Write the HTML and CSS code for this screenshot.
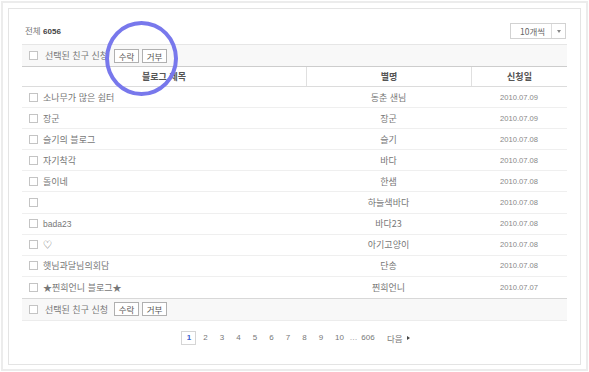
FILE: index.html
```html
<!DOCTYPE html>
<html lang="ko">
<head>
<meta charset="utf-8">
<link rel="stylesheet" href="styles.css">
</head>
<body>
<div class="outer">
  <div class="inner">
    <div class="topbar">
      <div class="total"><span class="total-label">전체</span> <b>6056</b></div>
      <div class="select"><span class="select-text">10개씩</span><span class="select-btn"><span class="tri"></span></span></div>
    </div>
    <div class="band">
      <span class="chk"></span><span class="band-text">선택된 친구 신청</span>
      <span class="btn">수락</span><span class="btn">거부</span>
    </div>
    <div class="thead">
      <div class="c1 th">블로그 제목</div>
      <div class="c2 th">별명</div>
      <div class="c3 th">신청일</div>
    </div>
    <div class="rows">
      <div class="row"><div class="c1"><span class="chk"></span><span class="title">소나무가 많은 쉼터</span></div><div class="c2">동춘 샌님</div><div class="c3 date">2010.07.09</div></div>
      <div class="row"><div class="c1"><span class="chk"></span><span class="title">장군</span></div><div class="c2">장군</div><div class="c3 date">2010.07.09</div></div>
      <div class="row"><div class="c1"><span class="chk"></span><span class="title">슬기의 블로그</span></div><div class="c2">슬기</div><div class="c3 date">2010.07.08</div></div>
      <div class="row"><div class="c1"><span class="chk"></span><span class="title">자기착각</span></div><div class="c2">바다</div><div class="c3 date">2010.07.08</div></div>
      <div class="row"><div class="c1"><span class="chk"></span><span class="title">돌이네</span></div><div class="c2">한샘</div><div class="c3 date">2010.07.08</div></div>
      <div class="row"><div class="c1"><span class="chk"></span><span class="title"></span></div><div class="c2">하늘색바다</div><div class="c3 date">2010.07.08</div></div>
      <div class="row"><div class="c1"><span class="chk"></span><span class="title latin">bada23</span></div><div class="c2">바다23</div><div class="c3 date">2010.07.08</div></div>
      <div class="row"><div class="c1"><span class="chk"></span><span class="title">♡</span></div><div class="c2">아기고양이</div><div class="c3 date">2010.07.08</div></div>
      <div class="row"><div class="c1"><span class="chk"></span><span class="title">햇님과달님의회담</span></div><div class="c2">단송</div><div class="c3 date">2010.07.08</div></div>
      <div class="row"><div class="c1"><span class="chk"></span><span class="title">★찐희언니 블로그★</span></div><div class="c2">찐희언니</div><div class="c3 date">2010.07.07</div></div>
    </div>
    <div class="band band-bottom">
      <span class="chk"></span><span class="band-text">선택된 친구 신청</span>
      <span class="btn">수락</span><span class="btn">거부</span>
    </div>
    <div class="pager">
      <span class="pg cur">1</span>
      <span class="pg">2</span>
      <span class="pg">3</span>
      <span class="pg">4</span>
      <span class="pg">5</span>
      <span class="pg">6</span>
      <span class="pg">7</span>
      <span class="pg">8</span>
      <span class="pg">9</span>
      <span class="pg pg10">10</span>
      <span class="dots">…</span>
      <span class="pg pg606">606</span>
      <span class="next">다음<span class="arrow"></span></span>
    </div>
  </div>
</div>
<div class="ring"></div>
</body>
</html>
```
FILE: styles.css
```css
* { box-sizing: border-box; }
html, body { margin: 0; padding: 0; background: #fff; }
body {
  font-family: "Noto Sans CJK KR", "Noto Sans", sans-serif;
  font-size: 9px;
  color: #666;
  width: 589px;
  height: 372px;
  position: relative;
  overflow: hidden;
}
.outer {
  margin: 1px;
  height: 370px;
  border: 2px solid #ececec;
  padding: 5px;
}
.inner {
  height: 357px;
  border: 1px solid #e4e4e4;
  padding: 0 13px 0 13px;
}
.topbar {
  display: flex;
  justify-content: space-between;
  align-items: center;
  height: 16px;
  margin-top: 14px;
  margin-right: 1px;
}
.total { font-size: 8.5px; color: #777; padding-left: 3px; line-height: 16px; }
.total b { color: #444; font-family: "Liberation Sans", sans-serif; font-size: 8px; }
.select {
  display: flex;
  width: 56px;
  height: 16px;
  border: 1px solid #d2d2d2;
  background: #fff;
}
.select-text {
  flex: 1;
  font-size: 8.5px;
  color: #666;
  line-height: 14px;
  padding-left: 9px;
}
.select-btn {
  width: 14px;
  border-left: 1px solid #dcdcdc;
  display: flex;
  align-items: center;
  justify-content: center;
}
.tri {
  width: 0; height: 0;
  border-left: 2.5px solid transparent;
  border-right: 2.5px solid transparent;
  border-top: 3px solid #888;
}
.band {
  display: flex;
  align-items: center;
  height: 22px;
  margin-top: 5px;
  background: #f8f8f8;
  border-top: 1px solid #e6e6e6;
  padding-left: 7px;
}
.band-bottom {
  margin-top: 0;
  border-top: 1px solid #d8d8d8;
  border-bottom: 1px solid #ececec;
  height: 23px;
}
.chk {
  display: inline-block;
  width: 9px;
  height: 9px;
  border: 1px solid #c4c4c4;
  background: #fff;
  flex: none;
}
.band-text { margin-left: 7px; color: #777; }
.btn {
  display: inline-flex;
  align-items: center;
  justify-content: center;
  height: 14px;
  width: 25px;
  border: 1px solid #b0b0b0;
  background: #fff;
  color: #555;
  font-size: 8.5px;
  margin-left: 3px;
}
.band-text + .btn { margin-left: 6px; }
.thead {
  display: flex;
  height: 21px;
  border-top: 1px solid #cdcdcd;
  border-bottom: 1px solid #dcdcdc;
  background: #fff;
}
.th {
  font-weight: bold;
  color: #555;
  display: flex;
  align-items: center;
  justify-content: center;
}
.thead .c2, .thead .c3 { border-left: 1px solid #e0e0e0; }
.c1 { width: 284px; }
.c2 { width: 165px; }
.c3 { width: 96px; }
.row {
  display: flex;
  height: 21.1px;
  border-bottom: 1px solid #efefef;
  align-items: center;
}
.row:last-child { border-bottom: none; }
.row .c1 {
  display: flex;
  align-items: center;
  padding-left: 7px;
}
.row .c2, .row .c3 { text-align: center; }
.row .c2 { color: #777; }
.title { margin-left: 5px; color: #777; }
.latin { font-family: "Liberation Sans", sans-serif; font-size: 8.5px; }
.date {
  font-family: "Liberation Sans", sans-serif;
  font-size: 7.6px;
  color: #888;
}
.pager {
  display: flex;
  align-items: center;
  justify-content: center;
  gap: 1.5px;
  margin-top: 10px;
  height: 14px;
  padding-left: 2px;
  font-family: "Liberation Sans", sans-serif;
  font-size: 8px;
  color: #777;
}
.pg {
  width: 15px;
  height: 14px;
  display: flex;
  align-items: center;
  justify-content: center;
}
.pg.cur {
  border: 1px solid #d5d5d5;
  color: #3c5fd0;
  font-weight: bold;
}
.pg10 { margin-left: 2px; }
.dots { width: 10px; text-align: center; color: #888; }
.pg606 { width: 16px; }
.next {
  margin-left: 9.5px;
  font-family: "Noto Sans CJK KR", sans-serif;
  font-size: 8.5px;
  color: #777;
  display: flex;
  align-items: center;
}
.arrow {
  display: inline-block;
  margin-left: 4px;
  width: 0; height: 0;
  border-top: 2.5px solid transparent;
  border-bottom: 2.5px solid transparent;
  border-left: 3px solid #444;
}
.ring {
  position: absolute;
  left: 105px;
  top: 21px;
  width: 73px;
  height: 75px;
  border: 4px solid #7878ec;
  border-radius: 50%;
}
```
